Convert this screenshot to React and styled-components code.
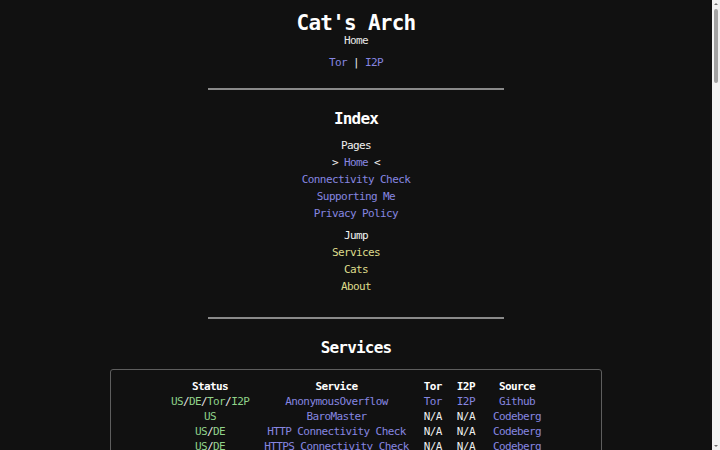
import React from "react";
import styled, { createGlobalStyle } from "styled-components";

const GlobalStyle = createGlobalStyle`
  html, body {
    margin: 0;
    padding: 0;
    background: #111111;
    overflow: hidden;
  }
  body {
    font-family: "DejaVu Sans Mono", "Liberation Mono", monospace;
    font-size: 11px;
    letter-spacing: -0.6px;
    color: #eeeeee;
  }
`;

/* Window: scrolling document on the left, a thin scroll rail on the right */
const Shell = styled.div`
  display: flex;
  height: 100vh;
`;

const Viewport = styled.div`
  flex: 1;
  min-width: 0;
  overflow: hidden;
`;

const ScrollRail = styled.aside`
  width: 8px;
  flex: none;
  background: #f3f3f3;
  display: flex;
  flex-direction: column;
  align-items: center;
`;

const RailArrow = styled.span`
  width: 0;
  height: 0;
  margin: ${(p) => (p.$down ? "auto 0 3px" : "3px 0 0")};
  border-left: 2px solid transparent;
  border-right: 2px solid transparent;
  ${(p) =>
    p.$down ? "border-top: 2px solid #707070;" : "border-bottom: 2px solid #707070;"}
`;

const RailThumb = styled.span`
  width: 4px;
  height: 74px;
  margin-top: 4px;
  border-radius: 2px;
  background: #a2a2a2;
`;

const Page = styled.main`
  display: flex;
  flex-direction: column;
  align-items: center;
  text-align: center;
  padding: 11px 0 40px;
`;

const Title = styled.h1`
  margin: 0;
  font-size: 21px;
  letter-spacing: -0.75px;
  line-height: 24px;
  font-weight: bold;
  color: #ffffff;
`;

const Subtitle = styled.div`
  line-height: 12px;
  color: #e8e8e8;
`;

const MirrorLine = styled.div`
  margin-top: 10px;
  line-height: 12px;
  color: #eeeeee;
`;

const Link = styled.a`
  color: ${(p) => (p.$tone === "jump" ? "#dedc8c" : "#8686e0")};
  text-decoration: none;
`;

const Rule = styled.hr`
  width: 296px;
  height: 0;
  border: none;
  border-top: 2px solid #8a8a8a;
  margin: ${(p) => p.$gap || "19px"} 0 0;
`;

const Heading = styled.h2`
  margin: 20px 0 0;
  font-size: 16px;
  letter-spacing: -0.8px;
  line-height: 18px;
  font-weight: bold;
  color: #ffffff;
`;

const NavGroup = styled.nav`
  display: flex;
  flex-direction: column;
  align-items: center;
  margin-top: ${(p) => p.$top || "8.5px"};
`;

const NavLabel = styled.div`
  line-height: 17px;
  color: #f2f2f2;
`;

const NavItem = styled.div`
  line-height: 17px;
  color: #f2f2f2;
`;

const TableBox = styled.section`
  box-sizing: border-box;
  width: 492px;
  margin-top: 12px;
  padding: 8.5px 0 12px 3px;
  border: 1px solid #5e5e5e;
  border-radius: 3px;
  display: flex;
  justify-content: center;
`;

const Table = styled.table`
  border-collapse: collapse;
`;

const Th = styled.th`
  padding: 0 7.5px;
  line-height: 15px;
  font-weight: bold;
  color: #ffffff;
  text-align: center;
  white-space: nowrap;
`;

const Td = styled.td`
  padding: 0 7.5px;
  line-height: 15px;
  text-align: center;
  white-space: nowrap;
  color: #eeeeee;
`;

const Up = styled.span`
  color: #8fd38a;
`;

const Slash = styled.span`
  color: #e6e6e6;
`;

const Para = styled.p`
  width: 480px;
  margin: 12px 0 0;
  line-height: 17px;
  color: #eeeeee;
`;

const CatCard = styled.div`
  width: 300px;
  height: 220px;
  margin-top: 16px;
  border: 1px solid #5e5e5e;
  border-radius: 3px;
  display: flex;
  align-items: flex-end;
  justify-content: center;
  padding-bottom: 8px;
  box-sizing: border-box;
`;

const services = [
  { status: ["US", "DE", "Tor", "I2P"], name: "AnonymousOverflow", tor: "Tor", i2p: "I2P", src: "Github" },
  { status: ["US"], name: "BaroMaster", tor: null, i2p: null, src: "Codeberg" },
  { status: ["US", "DE"], name: "HTTP Connectivity Check", tor: null, i2p: null, src: "Codeberg" },
  { status: ["US", "DE"], name: "HTTPS Connectivity Check", tor: null, i2p: null, src: "Codeberg" },
  { status: ["US", "DE", "Tor", "I2P"], name: "Invidious", tor: "Tor", i2p: "I2P", src: "Github" },
  { status: ["US", "DE", "Tor", "I2P"], name: "Libreddit", tor: "Tor", i2p: "I2P", src: "Github" },
  { status: ["US", "DE", "Tor", "I2P"], name: "Nitter", tor: "Tor", i2p: "I2P", src: "Github" },
  { status: ["US", "DE", "Tor"], name: "Piped", tor: "Tor", i2p: null, src: "Github" },
  { status: ["US", "DE", "Tor", "I2P"], name: "ProxiTok", tor: "Tor", i2p: "I2P", src: "Github" },
  { status: ["US", "DE", "Tor", "I2P"], name: "Rimgo", tor: "Tor", i2p: "I2P", src: "Codeberg" },
  { status: ["US", "DE", "Tor", "I2P"], name: "SearXNG", tor: "Tor", i2p: "I2P", src: "Github" },
  { status: ["US", "DE", "Tor", "I2P"], name: "Scribe", tor: "Tor", i2p: "I2P", src: "SourceHut" },
  { status: ["US", "DE", "Tor"], name: "SimplyTranslate", tor: "Tor", i2p: null, src: "Codeberg" },
  { status: ["US", "DE", "Tor", "I2P"], name: "Wikiless", tor: "Tor", i2p: "I2P", src: "Codeberg" },
  { status: ["US", "DE"], name: "XMPP", tor: null, i2p: null, src: "Github" },
];

function Status({ parts }) {
  return parts.map((p, i) => (
    <React.Fragment key={p}>
      {i > 0 && <Slash>/</Slash>}
      <Up>{p}</Up>
    </React.Fragment>
  ));
}

const cats = ["Luna", "Milo", "Pepper", "Shadow"];

export default function App() {
  return (
    <>
      <GlobalStyle />
      <Shell>
        <Viewport>
          <Page>
            <Title>Cat's Arch</Title>
            <Subtitle>Home</Subtitle>
            <MirrorLine>
              <Link href="#">Tor</Link> | <Link href="#">I2P</Link>
            </MirrorLine>

            <Rule />

            <Heading>Index</Heading>
            <NavGroup>
              <NavLabel>Pages</NavLabel>
              <NavItem>
                &gt; <Link href="#">Home</Link> &lt;
              </NavItem>
              <NavItem>
                <Link href="#">Connectivity Check</Link>
              </NavItem>
              <NavItem>
                <Link href="#">Supporting Me</Link>
              </NavItem>
              <NavItem>
                <Link href="#">Privacy Policy</Link>
              </NavItem>
            </NavGroup>
            <NavGroup $top="5px">
              <NavLabel>Jump</NavLabel>
              <NavItem>
                <Link $tone="jump" href="#services">Services</Link>
              </NavItem>
              <NavItem>
                <Link $tone="jump" href="#cats">Cats</Link>
              </NavItem>
              <NavItem>
                <Link $tone="jump" href="#about">About</Link>
              </NavItem>
            </NavGroup>

            <Rule $gap="22.5px" />

            <Heading id="services">Services</Heading>
            <TableBox>
              <Table>
                <thead>
                  <tr>
                    <Th>Status</Th>
                    <Th>Service</Th>
                    <Th>Tor</Th>
                    <Th>I2P</Th>
                    <Th>Source</Th>
                  </tr>
                </thead>
                <tbody>
                  {services.map((s) => (
                    <tr key={s.name}>
                      <Td>
                        <Status parts={s.status} />
                      </Td>
                      <Td>
                        <Link href="#">{s.name}</Link>
                      </Td>
                      <Td>{s.tor ? <Link href="#">{s.tor}</Link> : "N/A"}</Td>
                      <Td>{s.i2p ? <Link href="#">{s.i2p}</Link> : "N/A"}</Td>
                      <Td>
                        <Link href="#">{s.src}</Link>
                      </Td>
                    </tr>
                  ))}
                </tbody>
              </Table>
            </TableBox>

            <Rule $gap="22.5px" />

            <Heading id="cats">Cats</Heading>
            {cats.map((c) => (
              <CatCard key={c}>{c}</CatCard>
            ))}

            <Rule $gap="22.5px" />

            <Heading id="about">About</Heading>
            <Para>
              Cat's Arch is a small self-hosted collection of privacy respecting
              frontends and tools, run on spare hardware in the US and Germany.
            </Para>
            <Para>
              All services are provided free of charge, without logs and without
              tracking. Mirrors are available over Tor and I2P.
            </Para>
          </Page>
        </Viewport>
        <ScrollRail aria-hidden="true">
          <RailArrow />
          <RailThumb />
          <RailArrow $down />
        </ScrollRail>
      </Shell>
    </>
  );
}
